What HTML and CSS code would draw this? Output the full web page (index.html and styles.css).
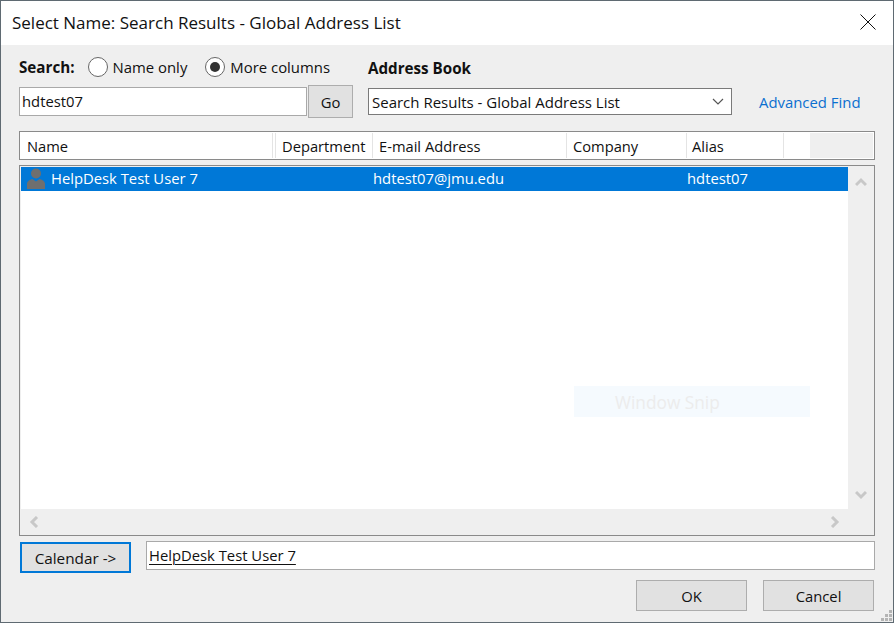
FILE: index.html
```html
<!DOCTYPE html>
<html lang="en">
<head>
<meta charset="utf-8">
<title>Select Name</title>
<link rel="stylesheet" href="styles.css">
</head>
<body>
<div class="dialog">
  <header class="titlebar">
    <span class="title">Select Name: Search Results - Global Address List</span>
    <svg class="close" width="16" height="16" viewBox="0 0 16 16"><path d="M.5.5l15 15M15.500.5l-15 15" stroke="#111" stroke-width="1" fill="none"/></svg>
  </header>
  <main class="content">
    <section class="search">
      <div class="search-left">
        <div class="radios">
          <b class="label">Search:</b>
          <span class="radio"></span><span class="radio-text first">Name only</span>
          <span class="radio on"></span><span class="radio-text">More columns</span>
        </div>
        <div class="query">
          <div class="field query-input">hdtest07</div>
          <div class="btn go">Go</div>
        </div>
      </div>
      <div class="search-right">
        <b class="label book">Address Book</b>
        <div class="book-row">
          <div class="select"><span>Search Results - Global Address List</span>
            <svg width="12" height="7" viewBox="0 0 12 7"><path d="M1 1l5 5 5-5" stroke="#555" stroke-width="1.200" fill="none"/></svg>
          </div>
          <a class="advanced">Advanced Find</a>
        </div>
      </div>
    </section>
    <div class="thead">
      <div class="th c-name">Name</div>
      <div class="th c-dept">Department</div>
      <div class="th c-mail">E-mail Address</div>
      <div class="th c-comp">Company</div>
      <div class="th c-alias">Alias</div>
      <div class="th c-blank"></div>
      <div class="th-rest"></div>
    </div>
    <div class="list">
      <div class="list-main">
        <div class="list-body">
          <div class="row">
            <svg class="avatar" width="18" height="21" viewBox="0 0 18 21"><circle cx="9" cy="5.500" r="5" fill="#6f6f6f"/><path d="M0 21v-5c0-2.500 2.500-4.500 5.500-5L9 13.500 12.500 11c3 .5 5.500 2.500 5.500 5v5z" fill="#6f6f6f"/></svg>
            <span class="r-name">HelpDesk Test User 7</span>
            <span class="r-mail">hdtest07@jmu.edu</span>
            <span class="r-alias">hdtest07</span>
          </div>
        </div>
        <div class="hscroll">
          <svg width="10" height="12" viewBox="0 0 10 12"><path d="M8 1L3 6l5 5" stroke="#c8c8c8" stroke-width="3" fill="none"/></svg>
          <svg width="10" height="12" viewBox="0 0 10 12"><path d="M2 1l5 5-5 5" stroke="#c8c8c8" stroke-width="3" fill="none"/></svg>
        </div>
      </div>
      <div class="vscroll">
        <svg width="12" height="10" viewBox="0 0 12 10"><path d="M1 8l5-5 5 5" stroke="#c8c8c8" stroke-width="3" fill="none"/></svg>
        <svg width="12" height="10" viewBox="0 0 12 10"><path d="M1 2l5 5 5-5" stroke="#c8c8c8" stroke-width="3" fill="none"/></svg>
      </div>
      <div class="snip"><span>Window Snip</span></div>
    </div>
    <div class="recipient">
      <div class="btn calendar">Calendar -&gt;</div>
      <div class="field picked"><u>HelpDesk Test User 7</u></div>
    </div>
    <div class="actions">
      <div class="btn action">OK</div>
      <div class="btn action">Cancel</div>
    </div>
  </main>
  <svg class="grip" width="11" height="11" viewBox="0 0 11 11" fill="#b4b4b4"><rect x="8" y="0" width="3" height="3"/><rect x="4" y="4" width="3" height="3"/><rect x="8" y="4" width="3" height="3"/><rect x="0" y="8" width="3" height="3"/><rect x="4" y="8" width="3" height="3"/><rect x="8" y="8" width="3" height="3"/></svg>
</div>
</body>
</html>
```
FILE: styles.css
```css
* { box-sizing: border-box; }
html, body { margin: 0; padding: 0; }
body {
  width: 894px;
  height: 623px;
  overflow: hidden;
  font-family: "Open Sans", "Noto Sans", sans-serif;
  font-size: 14.800px;
  color: #111;
}
.dialog {
  position: relative;
  width: 894px;
  height: 623px;
  display: flex;
  flex-direction: column;
  border: 1px solid #5f6a72;
  background: #efefef;
}
.titlebar {
  height: 44px;
  flex: none;
  background: #fff;
  display: flex;
  align-items: center;
  justify-content: space-between;
  padding: 0 17px 2px 11px;
}
.title { font-size: 17px; }
.content {
  flex: 1;
  display: flex;
  flex-direction: column;
  padding: 11px 18px 0;
}
.search { display: flex; height: 75px; flex: none; }
.search-left { width: 349px; }
.radios { display: flex; align-items: center; height: 22px; }
.label { font-weight: 700; font-size: 15.200px; }
.radio {
  width: 20px;
  height: 20px;
  border-radius: 50%;
  border: 1px solid #666;
  background: #fff;
  margin-left: 13px;
  margin-right: 5px;
  display: flex;
  align-items: center;
  justify-content: center;
  flex: none;
}
.radio.on::after {
  content: "";
  width: 10px;
  height: 10px;
  border-radius: 50%;
  background: #333;
}
.radio-text { white-space: nowrap; font-size: 14.900px; }
.radio-text.first { margin-right: 5px; }
.query { display: flex; align-items: center; margin-top: 7px; }
.field { background: #fff; border: 1px solid #a9a9a9; }
.query-input {
  width: 288px;
  height: 29px;
  padding-left: 2px;
  line-height: 26px;
}
.btn {
  background: #e1e1e1;
  border: 1px solid #adadad;
  display: flex;
  align-items: center;
  justify-content: center;
  flex: none;
}
.go { width: 45px; height: 33px; margin-left: 1px; }
.search-right { display: flex; flex-direction: column; }
.book { height: 22px; line-height: 24px; }
.book-row { display: flex; align-items: center; margin-top: 10px; }
.select {
  width: 364px;
  height: 27px;
  background: #fff;
  border: 1px solid #7a7a7a;
  display: flex;
  align-items: center;
  justify-content: space-between;
  padding: 0 7px 0 3px;
  font-size: 15px;
}
.advanced { margin-left: 27px; color: #0b6fcf; font-size: 14.900px; }
.thead {
  flex: none;
  height: 29px;
  margin-top: 0;
  display: flex;
  background: #fff;
  border: 1px solid #8a8a8a;
  padding: 1px;
}
.th {
  height: 25px;
  line-height: 27px;
  border-right: 1px solid #e4e4e4;
  flex: none;
  white-space: nowrap;
  font-size: 14.700px;
}
.c-name { width: 252px; padding-left: 6px; box-shadow: 2px 0 0 #fff, 3px 0 0 #e4e4e4; }
.c-dept { width: 100px; padding-left: 9px; }
.c-mail { width: 194px; padding-left: 6px; }
.c-comp { width: 120px; padding-left: 6px; }
.c-alias { width: 97px; padding-left: 5px; }
.c-blank { width: 26px; border-right: 0; }
.th-rest { flex: 1; background: #efefef; height: 25px; }
.list {
  position: relative;
  flex: none;
  height: 371px;
  margin-top: 5px;
  display: flex;
  background: #efefef;
  border: 1px solid #8a8a8a;
  padding: 1px;
}
.list-main { width: 827px; display: flex; flex-direction: column; }
.list-body { flex: 1; background: #fff; }
.row {
  height: 24px;
  padding-bottom: 2px;
  background: #0078d7;
  color: #fff;
  display: flex;
  align-items: center;
}
.avatar { margin-left: 6px; flex: none; align-self: flex-start; margin-top: 1px; }
.r-name { margin-left: 6px; width: 322px; }
.r-mail { width: 314px; }
.hscroll {
  height: 25px;
  flex: none;
  display: flex;
  align-items: center;
  justify-content: space-between;
  padding: 0 8px 0 8px;
}
.vscroll {
  flex: 1;
  display: flex;
  flex-direction: column;
  align-items: center;
  justify-content: space-between;
  padding: 10px 0 34px;
}
.snip {
  position: absolute;
  left: 554px;
  top: 220px;
  width: 236px;
  height: 31px;
  background: #f5fafe;
  color: #ececec;
  font-size: 17.300px;
  line-height: 34px;
  padding-left: 41px;
}
.recipient { display: flex; flex: none; margin-top: 5px; align-items: flex-start; }
.calendar {
  width: 111px;
  height: 31px;
  margin: 1px 0 0 1px;
  border: 2px solid #0078d7;
  font-size: 15.300px;
}
.picked {
  width: 729px;
  height: 29px;
  margin-left: 15px;
  padding-left: 2px;
  line-height: 26px;
}
.picked u { text-underline-offset: 3px; text-decoration-thickness: 1px; }
.actions { display: flex; justify-content: flex-end; gap: 16px; margin-top: 7px; padding-right: 1px; }
.action { width: 111px; height: 31px; }
.grip { position: absolute; right: 1px; bottom: 1px; }
```
